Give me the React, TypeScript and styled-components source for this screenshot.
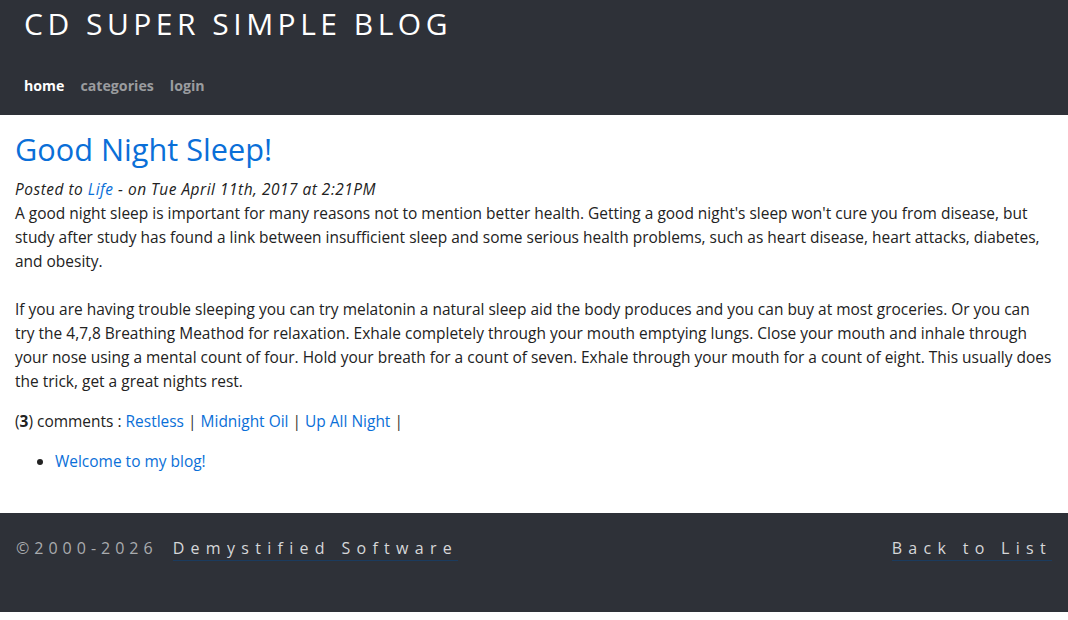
import * as React from "react";
import styled, { createGlobalStyle } from "styled-components";

const GlobalStyle = createGlobalStyle`
  html, body {
    margin: 0;
    padding: 0;
    background: #ffffff;
  }
  body {
    font-family: "Open Sans", "DejaVu Sans", sans-serif;
    color: #222;
  }
`;

const comments = ["Restless", "Midnight Oil", "Up All Night"];

const App: React.FC = () => {
  return (
    <>
      <GlobalStyle />
      <Page>
        <Header>
          <SiteTitle>CD SUPER SIMPLE BLOG</SiteTitle>
          <Nav>
            <NavLink href="#" $active>
              home
            </NavLink>
            <NavLink href="#">categories</NavLink>
            <NavLink href="#">login</NavLink>
          </Nav>
        </Header>

        <Main>
          <PostTitle>Good Night Sleep!</PostTitle>
          <Meta>
            Posted to <BlueLink href="#">Life</BlueLink> - on Tue April 11th,
            2017 at 2:21PM
          </Meta>
          <Body>
            A good night sleep is important for many reasons not to mention
            better health. Getting a good night's sleep won't cure you from
            disease, but study after study has found a link between
            insufficient sleep and some serious health problems, such as heart
            disease, heart attacks, diabetes, and obesity.
            <br />
            <br />
            If you are having trouble sleeping you can try melatonin a natural
            sleep aid the body produces and you can buy at most groceries. Or
            you can try the 4,7,8 Breathing Meathod for relaxation. Exhale
            completely through your mouth emptying lungs. Close your mouth and
            inhale through your nose using a mental count of four. Hold your
            breath for a count of seven. Exhale through your mouth for a count
            of eight. This usually does the trick, get a great nights rest.
          </Body>
          <Comments>
            (<b>3</b>) comments :{" "}
            {comments.map((c) => (
              <React.Fragment key={c}>
                <BlueLink href="#">{c}</BlueLink> <Sep>|</Sep>{" "}
              </React.Fragment>
            ))}
          </Comments>
          <Related>
            <li>
              <BlueLink href="#">Welcome to my blog!</BlueLink>
            </li>
          </Related>
        </Main>

        <Footer>
          <FooterText>
            <Copy>©2000-2026</Copy>
            <FooterLink href="#">Demystified Software</FooterLink>
          </FooterText>
          <FooterText>
            <FooterLink href="#">Back to List</FooterLink>
          </FooterText>
        </Footer>
      </Page>
    </>
  );
};

export default App;

const Page = styled.div`
  display: flex;
  flex-direction: column;
  min-height: 620px;
`;

const Header = styled.header`
  background: #2e3138;
  height: 115px;
  box-sizing: border-box;
  padding: 6px 24px 0;
  display: flex;
  flex-direction: column;
`;

const SiteTitle = styled.div`
  color: #ffffff;
  font-size: 30px;
  letter-spacing: 4.5px;
  line-height: 36px;
`;

const Nav = styled.nav`
  display: flex;
  gap: 16px;
  margin-top: 32px;
`;

const NavLink = styled.a<{ $active?: boolean }>`
  color: ${(p) => (p.$active ? "#ffffff" : "#9a9c9f")};
  font-weight: 700;
  font-size: 14.2px;
  line-height: 24px;
  text-decoration: none;
`;

const Main = styled.main`
  padding: 12px 15px 24px;
  font-size: 15.47px;
  line-height: 24px;
`;

const PostTitle = styled.h1`
  margin: 0 0 6px;
  color: #0a6fd8;
  font-size: 30.7px;
  font-weight: 400;
  line-height: 44px;
`;

const Meta = styled.div`
  font-style: italic;
  letter-spacing: 0.5px;
`;

const Body = styled.div``;

const BlueLink = styled.a`
  color: #0a6fd8;
  text-decoration: none;
`;

const Comments = styled.div`
  margin-top: 16px;
`;

const Sep = styled.span`
  color: #333;
`;

const Related = styled.ul`
  margin: 16px 0 0;
  padding-left: 40px;
`;

const Footer = styled.footer`
  background: #2e3138;
  height: 99px;
  margin-bottom: 8px;
  margin-top: auto;
  box-sizing: border-box;
  padding: 24px 16px 0;
  display: flex;
  justify-content: space-between;
  align-items: flex-start;
`;

const FooterText = styled.div`
  display: flex;
  gap: 15px;
  font-size: 16px;
  line-height: 22px;
`;

const Copy = styled.span`
  color: #a9abae;
  letter-spacing: 5px;
`;

const FooterLink = styled.a`
  color: #d6d7d9;
  letter-spacing: 6.3px;
  text-decoration: none;
  border-bottom: 1px solid #1b3b5e;
  padding-bottom: 1px;
`;
